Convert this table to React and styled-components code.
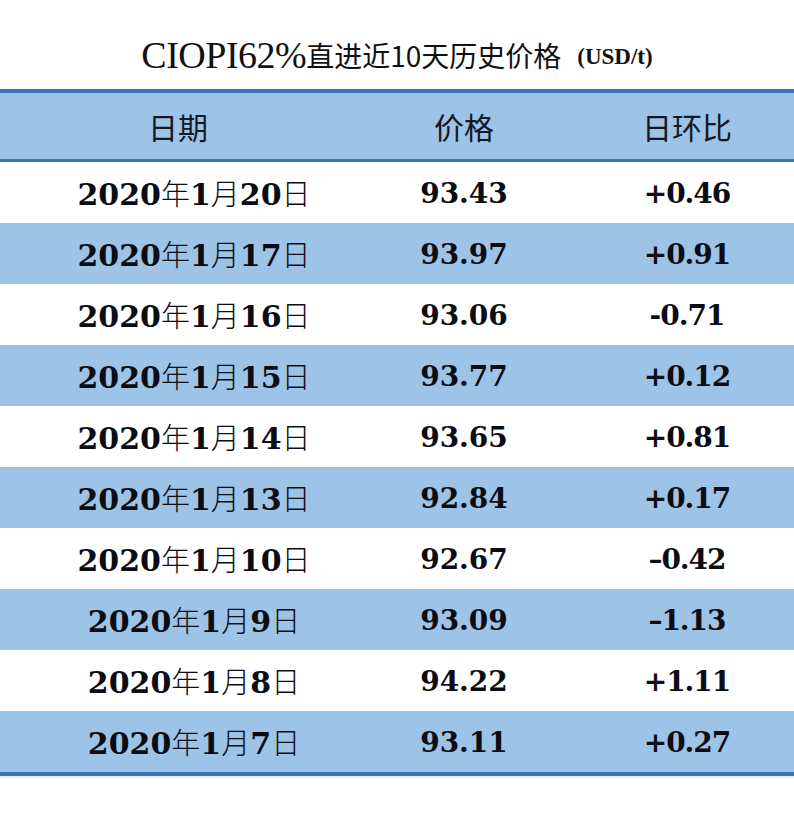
import React from "react";
import styled, { createGlobalStyle } from "styled-components";

const Global = createGlobalStyle`
  html, body { margin: 0; padding: 0; background: #ffffff; }
  body { width: 794px; }
`;

const Page = styled.div`
  width: 794px;
  background: #ffffff;
  padding-bottom: 45px;
`;

const Title = styled.h1`
  margin: 0;
  height: 89px;
  box-sizing: border-box;
  padding-top: 20px;
  display: flex;
  align-items: center;
  justify-content: center;
  font-weight: normal;
  color: #111111;
  white-space: nowrap;
`;

const TitleLatin = styled.span`
  font-family: "Liberation Serif", "Times New Roman", serif;
  font-size: 38px;
  letter-spacing: -0.5px;
`;

const TitleCJK = styled.span`
  font-family: "Noto Sans CJK SC", "Noto Sans", sans-serif;
  font-size: 28px;
  font-weight: 400;
`;

const TitleUnit = styled.span`
  font-family: "Liberation Serif", "Times New Roman", serif;
  font-weight: bold;
  font-size: 23px;
  margin-left: 16px;
  position: relative;
  top: 2px;
`;

const Table = styled.div`
  border-top: 4px solid #3b74b4;
  border-bottom: 4px solid #3b74b4;
  box-shadow: 0 2px 0 #e6eef7;
`;

const Row = styled.div`
  display: grid;
  grid-template-columns: 388px 152px 254px;
  align-items: center;
  height: ${(p) => (p.$header ? "66px" : "61px")};
  background: ${(p) => (p.$shaded || p.$header ? "#9dc3e6" : "#ffffff")};
  border-bottom: ${(p) => (p.$header ? "3px solid #3b74b4" : "none")};
`;

const HeadCell = styled.div`
  text-align: center;
  font-family: "Noto Sans CJK SC", "Noto Sans", sans-serif;
  font-size: 30px;
  font-weight: 400;
  color: #141824;
  padding-left: ${(p) => p.$pl || 0}px;
  padding-right: ${(p) => p.$pr || 0}px;
  line-height: 1;
`;

const Cell = styled.div`
  text-align: center;
  font-family: "DejaVu Serif", serif;
  font-weight: bold;
  font-size: ${(p) => p.$size || 28}px;
  letter-spacing: ${(p) => p.$ls || 0}px;
  color: #0c0d14;
  padding-left: ${(p) => p.$pl || 0}px;
  padding-top: 2px;
  white-space: nowrap;
  line-height: 1;
`;

const Han = styled.span`
  font-family: "Noto Sans CJK SC", sans-serif;
  font-weight: 300;
  font-size: 29px;
`;

const rows = [
  ["20", "93.43", "+0.46"],
  ["17", "93.97", "+0.91"],
  ["16", "93.06", "-0.71"],
  ["15", "93.77", "+0.12"],
  ["14", "93.65", "+0.81"],
  ["13", "92.84", "+0.17"],
  ["10", "92.67", "\u20130.42"],
  ["9", "93.09", "\u20131.13"],
  ["8", "94.22", "+1.11"],
  ["7", "93.11", "+0.27"],
];

export default function App() {
  return (
    <Page>
      <Global />
      <Title>
        <TitleLatin>CIOPI62%</TitleLatin>
        <TitleCJK>直进近10天历史价格</TitleCJK>
        <TitleUnit>(USD/t)</TitleUnit>
      </Title>
      <Table>
        <Row $header>
          <HeadCell $pr={32}>日期</HeadCell>
          <HeadCell>价格</HeadCell>
          <HeadCell $pl={40}>日环比</HeadCell>
        </Row>
        {rows.map(([d, p, c], i) => (
          <Row key={d} $shaded={i % 2 === 1}>
            <Cell $size={30}>
              2020<Han>年</Han>1<Han>月</Han>
              {d}
              <Han>日</Han>
            </Cell>
            <Cell>{p}</Cell>
            <Cell $pl={40} $ls={-1}>{c}</Cell>
          </Row>
        ))}
      </Table>
    </Page>
  );
}
